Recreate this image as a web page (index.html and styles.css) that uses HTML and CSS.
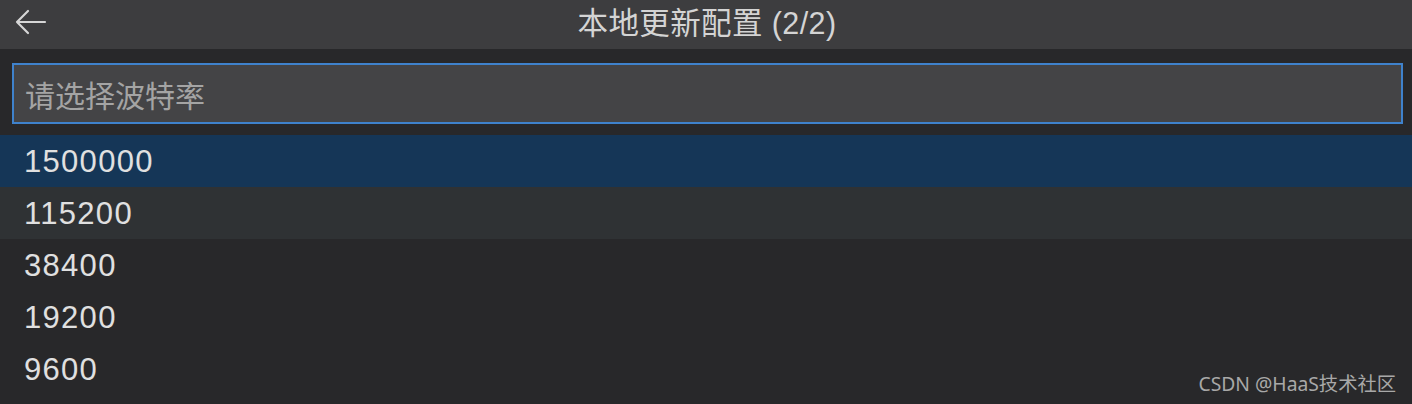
FILE: index.html
```html
<!DOCTYPE html>
<html lang="zh">
<head>
<meta charset="utf-8">
<link rel="stylesheet" href="styles.css">
</head>
<body>
<div class="quick">
  <header class="titlebar">
    <span class="back">
      <svg width="34" height="28" viewBox="0 0 34 28"><path d="M31 14H3M14 3L3 14l11 11" fill="none" stroke="#d6d6d6" stroke-width="2.2" stroke-linecap="round" stroke-linejoin="round"/></svg>
    </span>
    <span class="title">本地更新配置 (2/2)</span>
  </header>
  <div class="inputwrap">
    <div class="input">请选择波特率</div>
  </div>
  <ul class="list">
    <li class="row selected">1500000</li>
    <li class="row hover">115200</li>
    <li class="row">38400</li>
    <li class="row">19200</li>
    <li class="row">9600</li>
  </ul>
  <div class="watermark">CSDN @HaaS技术社区</div>
</div>
</body>
</html>
```

FILE: styles.css
```css
html, body {
  margin: 0;
  padding: 0;
  background: #28282a;
  width: 1412px;
  height: 404px;
  overflow: hidden;
  font-family: "Liberation Sans", "Noto Sans CJK SC", sans-serif;
}
.quick {
  position: relative;
  height: 404px;
}
.titlebar {
  position: relative;
  height: 49px;
  background: #3d3d3f;
  display: flex;
  align-items: center;
  justify-content: center;
}
.back {
  position: absolute;
  left: 14px;
  top: 8px;
  display: flex;
}
.title {
  color: #d4d4d4;
  font-size: 30.5px;
  letter-spacing: 0.4px;
  margin-left: 2px;
  margin-top: -8px;
}
.inputwrap {
  padding: 14px 9px 11px 12px;
}
.input {
  box-sizing: border-box;
  height: 61px;
  border: 2px solid #3f82cc;
  background: #444446;
  color: #a4a4a4;
  font-family: "Noto Sans CJK SC", sans-serif;
  font-size: 30px;
  display: flex;
  align-items: center;
  padding-left: 11px;
}
.list {
  list-style: none;
  margin: 0;
  padding: 0;
}
.row {
  height: 52px;
  display: flex;
  align-items: center;
  padding-left: 24px;
  color: #e0e0e0;
  font-size: 31px;
  letter-spacing: 1.3px;
  padding-top: 2px;
  box-sizing: border-box;
}
.row.selected {
  background: #153657;
}
.row.hover {
  background: #2f3234;
}
.watermark {
  position: absolute;
  right: 16px;
  bottom: 7px;
  color: #a8a8a8;
  font-family: "Noto Sans", "Noto Sans CJK SC", sans-serif;
  font-size: 19.3px;
}
```
